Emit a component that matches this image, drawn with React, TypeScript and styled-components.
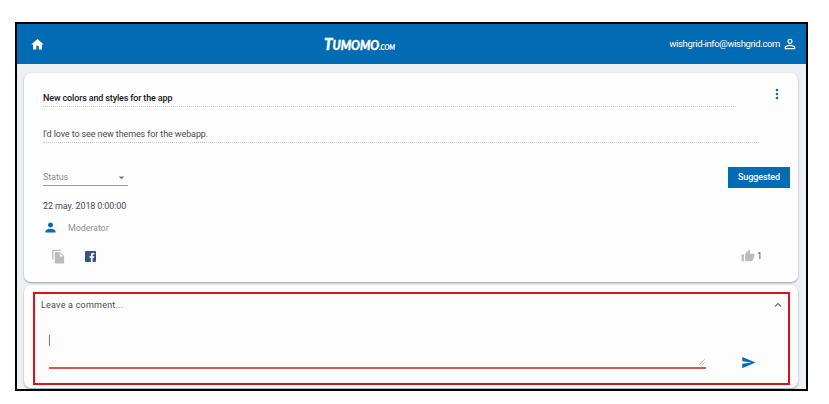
import React from 'react';
import styled, { createGlobalStyle } from 'styled-components';
import { MdHome, MdPersonOutline, MdMoreVert, MdPerson, MdFileCopy, MdThumbUp, MdSend, MdExpandLess, MdArrowDropDown } from 'react-icons/md';

const blue = '#016bb3';

const GlobalStyle = createGlobalStyle`
  * { box-sizing: border-box; }
  body { margin: 0; background: #fff; font-family: Roboto, sans-serif; }
  svg { display: block; flex: none; }
`;

const Window = styled.main`
  width: 793px;
  height: 369px;
  margin: 22px 0 0 15px;
  border: 2px solid #000;
  background: #edf1f5;
  overflow: hidden;
`;

const Header = styled.header`
  height: 40px;
  padding: 0 8px 0 13px;
  display: grid;
  grid-template-columns: 293px 74px 1fr;
  align-items: center;
  background: ${blue};
  color: #fff;
`;

const Account = styled.div`
  display: flex;
  align-items: center;
  justify-content: flex-end;
  gap: 2px;
`;

const Label = styled.span<{ $size?: number; $color?: string; $weight?: number; $spacing?: number }>`
  font-size: ${p => p.$size ?? 9}px;
  line-height: 12px;
  color: ${p => p.$color ?? '#4c4c4c'};
  font-weight: ${p => p.$weight ?? 400};
  letter-spacing: ${p => p.$spacing ?? 0}px;
  white-space: nowrap;
`;

const Content = styled.div`
  padding: 9px 8px 0 7px;
  display: flex;
  flex-direction: column;
  gap: 3px;
`;

const Card = styled.section<{ $height: number }>`
  height: ${p => p.$height}px;
  flex: none;
  background: #fdfdfe;
  border-radius: 7px;
  box-shadow: 0 1px 2px rgba(60, 70, 85, 0.48);
`;

const Wish = styled(Card)`
  padding: 16px 8px 0 19px;
`;

const TitleRow = styled.div`
  display: flex;
  justify-content: space-between;
  padding-right: 5px;
`;

const DottedField = styled.div<{ $width: number; $height: number }>`
  width: ${p => p.$width}px;
  height: ${p => p.$height}px;
  display: flex;
  align-items: flex-end;
  padding-bottom: 2px;
  border-bottom: 1px dotted #c5c8cf;
`;

const Menu = styled.div`
  margin-top: -3px;
  color: #24659b;
`;

const StatusRow = styled.div`
  display: flex;
  justify-content: space-between;
  align-items: flex-start;
  margin-top: 24px;
  height: 21px;
`;

const Select = styled.div`
  width: 85px;
  height: 19px;
  display: flex;
  justify-content: space-between;
  align-items: center;
  padding-top: 2px;
  border-bottom: 1px solid #999;
  color: #777;
`;

const Tag = styled.div`
  width: 62px;
  height: 21px;
  display: flex;
  align-items: center;
  justify-content: center;
  background: ${blue};
  padding-bottom: 1px;
`;

const DateLine = styled.div`
  display: flex;
  margin-top: 12px;
  height: 12px;
`;

const Author = styled.div`
  display: flex;
  align-items: center;
  gap: 10px;
  margin-top: 8px;
  height: 15px;
  color: ${blue};
`;

const Actions = styled.div`
  display: flex;
  align-items: center;
  justify-content: space-between;
  margin-top: 13px;
  height: 16px;
  padding: 0 28px 0 8px;
  color: #b9bbbd;
`;

const Group = styled.div<{ $gap: number }>`
  display: flex;
  align-items: center;
  gap: ${p => p.$gap}px;
`;

const CommentCard = styled(Card)`
  padding: 7px 8px 0 9px;
`;

const Highlight = styled.div`
  height: 93px;
  border: 2px solid #dc1018;
  padding: 4px 3px 0 6px;
`;

const CommentHead = styled.div`
  display: flex;
  justify-content: space-between;
  align-items: center;
  height: 13px;
`;

const Composer = styled.div`
  display: flex;
  align-items: flex-end;
  margin-top: 18px;
  padding-left: 8px;
  gap: 35px;
  height: 40px;
`;

const TextArea = styled.div`
  width: 657px;
  height: 40px;
  border-bottom: 2px solid #d9534f;
  display: flex;
  justify-content: space-between;
  align-items: flex-end;
`;

const Caret = styled.div`
  width: 1px;
  height: 11px;
  align-self: flex-start;
  margin-top: 6px;
  background: #f0524c;
`;

const Send = styled.div`
  color: ${blue};
  margin-bottom: -1px;
`;

const Logo = () => (
  <svg width="74" height="20" viewBox="0 0 74 20" fill="#fff" stroke="#fff" strokeWidth="0.4" fontFamily="Lato, sans-serif" fontWeight="900" fontStyle="italic">
    <text x="1" y="15.5" fontSize="16.5" textLength="71" lengthAdjust="spacingAndGlyphs">
      T<tspan fontSize="12.8">UMOMO</tspan><tspan fontSize="7" strokeWidth="0.1">.COM</tspan>
    </text>
  </svg>
);

const Facebook = () => (
  <svg width="11" height="11" viewBox="0 0 11 11">
    <rect width="11" height="11" rx="1" fill="#3c4f8a" />
    <path d="M7.6 11V6.8H9l.25-1.6H7.6V4.2c0-.5.2-.8.9-.8h.8V1.9L8.1 1.8C6.7 1.8 5.9 2.6 5.9 4v1.2H4.5v1.6h1.4V11z" fill="#fff" />
  </svg>
);

const ResizeGrip = () => (
  <svg width="8" height="9" viewBox="0 0 8 9" stroke="#999" strokeWidth="0.8">
    <path d="M1.5 6.5 6.5 1.5M4.5 6.5 6.5 4.5" />
  </svg>
);

export default function App() {
  return (
    <>
      <GlobalStyle />
      <Window>
        <Header>
          <MdHome size={15} />
          <Logo />
          <Account>
            <Label $color="#fff" $size={9.5} $spacing={-0.37}>wishgrid-info@wishgrid.com</Label>
            <MdPersonOutline size={16} />
          </Account>
        </Header>
        <Content>
          <Wish $height={209}>
            <TitleRow>
              <DottedField $width={693} $height={18}>
                <Label $weight={500} $color="#161616" $spacing={-0.15}>New colors and styles for the app</Label>
              </DottedField>
              <Menu><MdMoreVert size={16} /></Menu>
            </TitleRow>
            <DottedField $width={716} $height={36}>
              <Label $spacing={-0.11}>I'd love to see new themes for the webapp.</Label>
            </DottedField>
            <StatusRow>
              <Select>
                <Label $color="#8d8d8d" $spacing={-0.1}>Status</Label>
                <MdArrowDropDown size={13} />
              </Select>
              <Tag><Label $color="#fff" $weight={500} $spacing={-0.1}>Suggested</Label></Tag>
            </StatusRow>
            <DateLine><Label $spacing={-0.12}>22 may. 2018 0:00:00</Label></DateLine>
            <Author>
              <MdPerson size={15} />
              <Label $color="#929292" $spacing={-0.12}>Moderator</Label>
            </Author>
            <Actions>
              <Group $gap={19}>
                <MdFileCopy size={15} />
                <Facebook />
              </Group>
              <Group $gap={2}>
                <MdThumbUp size={14} />
                <Label>1</Label>
              </Group>
            </Actions>
          </Wish>
          <CommentCard $height={103}>
            <Highlight>
              <CommentHead>
                <Label $spacing={0.22}>Leave a comment...</Label>
                <MdExpandLess size={14} color="#666" />
              </CommentHead>
              <Composer>
                <TextArea><Caret /><ResizeGrip /></TextArea>
                <Send><MdSend size={15} /></Send>
              </Composer>
            </Highlight>
          </CommentCard>
        </Content>
      </Window>
    </>
  );
}
